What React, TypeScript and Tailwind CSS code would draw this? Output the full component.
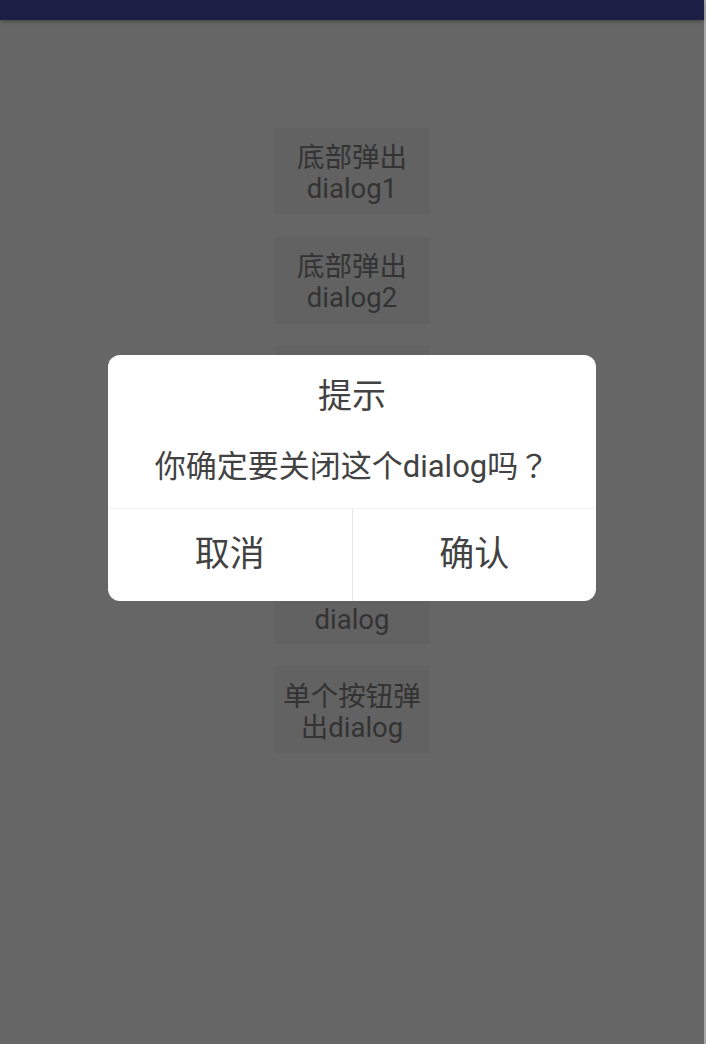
import React from "react";

const font = { fontFamily: 'Roboto, "Noto Sans CJK SC", sans-serif' };

function Btn({ lines, className = "" }: { lines: string[]; className?: string }) {
  return (
    <div
      className={`w-[155px] bg-[#626262] text-[#333333] text-[27.5px] leading-[31px] text-center flex flex-col items-center ${className}`}
    >
      {lines.map((l, i) => (
        <span key={i}>{l}</span>
      ))}
    </div>
  );
}

export default function App() {
  return (
    <div className="relative w-[706px] h-[1044px] flex overflow-hidden" style={font}>
      <div className="w-[704px] h-full bg-[#666666] flex flex-col">
        <div className="h-[20px] bg-[#1b1f45] shadow-[0_2px_3px_rgba(0,0,0,0.25)] relative z-10" />
        <div className="flex flex-col items-center gap-[22px] pt-[108px]">
          <Btn lines={["底部弹出", "dialog1"]} className="pt-[14px] pb-[11px]" />
          <Btn lines={["底部弹出", "dialog2"]} className="pt-[14px] pb-[11px]" />
          <Btn lines={[]} className="h-[87px]" />
          <Btn lines={["dialog"]} className="h-[189px] justify-end pb-[9px]" />
          <Btn lines={["单个按钮弹", "出dialog"]} className="pt-[15px] pb-[10px]" />
        </div>
      </div>
      <div className="w-[2px] h-full bg-[#a9a9a9]" />

      <div className="absolute inset-0 flex justify-center pt-[355px] pr-[2px]">
        <div className="w-[488px] h-[246px] bg-white rounded-[12px] flex flex-col text-[#424242]">
          <div className="pt-[16px] text-[34px] leading-[50px] text-center">提示</div>
          <div className="mt-[20px] h-[46px] text-[31px] leading-[46px] text-center">
            你确定要关闭这个dialog吗
            <span style={{ fontFamily: '"Noto Sans CJK JP", "Noto Sans CJK TC", sans-serif' }}>？</span>
          </div>
          <div className="mt-[21px] border-t border-[#f2f2f2] flex flex-1">
            <div className="flex-1 flex items-center justify-center text-[35px]">取消</div>
            <div className="w-px bg-[#e6e6e6]" />
            <div className="flex-1 flex items-center justify-center text-[35px]">确认</div>
          </div>
        </div>
      </div>
    </div>
  );
}
